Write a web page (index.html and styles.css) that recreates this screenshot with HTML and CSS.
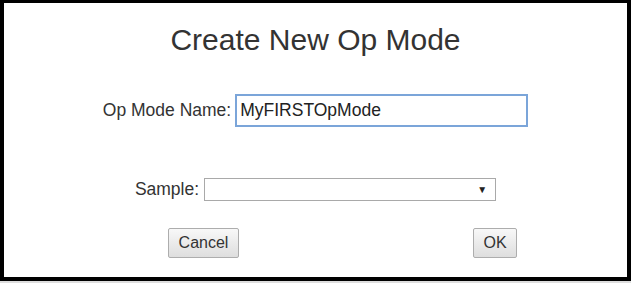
FILE: index.html
```html
<!DOCTYPE html>
<html lang="en">
  <head>
    <meta charset="UTF-8" />
    <title>Create New Op Mode</title>
    <link rel="stylesheet" href="styles.css">
  </head>
  <body>
    <div class="dialog">
      <h1>Create New Op Mode</h1>
      <div class="row name-row">
        <label for="opModeName">Op Mode Name:</label>
        <input type="text" id="opModeName" class="name-input" value="MyFIRSTOpMode" />
      </div>
      <div class="row sample-row">
        <label for="sample">Sample:</label>
        <div class="select" id="sample">
          <span class="arrow">&#9660;</span>
        </div>
      </div>
      <div class="buttons">
        <button class="btn btn-cancel">Cancel</button>
        <button class="btn btn-ok">OK</button>
      </div>
    </div>
  </body>
</html>
```

FILE: styles.css
```css
body {
  margin: 0;
  padding: 0;
  background: #dedede;
  font-family: "Liberation Sans", Arial, sans-serif;
}

.dialog {
  box-sizing: border-box;
  width: 631px;
  height: 281px;
  background: #ffffff;
  border: 4px solid #000;
  border-top-width: 3px;
  display: flex;
  flex-direction: column;
}

h1 {
  margin: 19px 0 0;
  font-size: 30px;
  line-height: 36px;
  font-weight: normal;
  color: #333;
  text-align: center;
}

.row {
  display: flex;
  justify-content: center;
  align-items: center;
  color: #333;
  font-size: 17.5px;
}

.name-row {
  margin-top: 36px;
  gap: 4px;
}

.name-input {
  box-sizing: border-box;
  width: 293px;
  height: 33px;
  margin: 0;
  padding: 0 0 0 3px;
  border: 2px solid #7ba5d9;
  font-family: "Liberation Sans", Arial, sans-serif;
  font-size: 17.5px;
  color: #222;
  outline: none;
}

.sample-row {
  margin-top: 51px;
  gap: 5px;
}

.select {
  box-sizing: border-box;
  width: 292px;
  height: 23px;
  border: 1px solid #a9a9a9;
  display: flex;
  justify-content: flex-end;
  align-items: center;
  padding-right: 8px;
}

.arrow {
  font-size: 10px;
  color: #222;
}

.buttons {
  margin: 27px 0 0 164px;
  width: 349px;
  display: flex;
  justify-content: space-between;
}

.btn {
  box-sizing: border-box;
  height: 30px;
  padding: 0;
  border: 1px solid #adadad;
  border-radius: 2px;
  background: linear-gradient(#f8f8f8, #dedede);
  font-family: "Liberation Sans", Arial, sans-serif;
  font-size: 16px;
  color: #333;
}

.btn-cancel {
  width: 71px;
}

.btn-ok {
  width: 44px;
}
```
